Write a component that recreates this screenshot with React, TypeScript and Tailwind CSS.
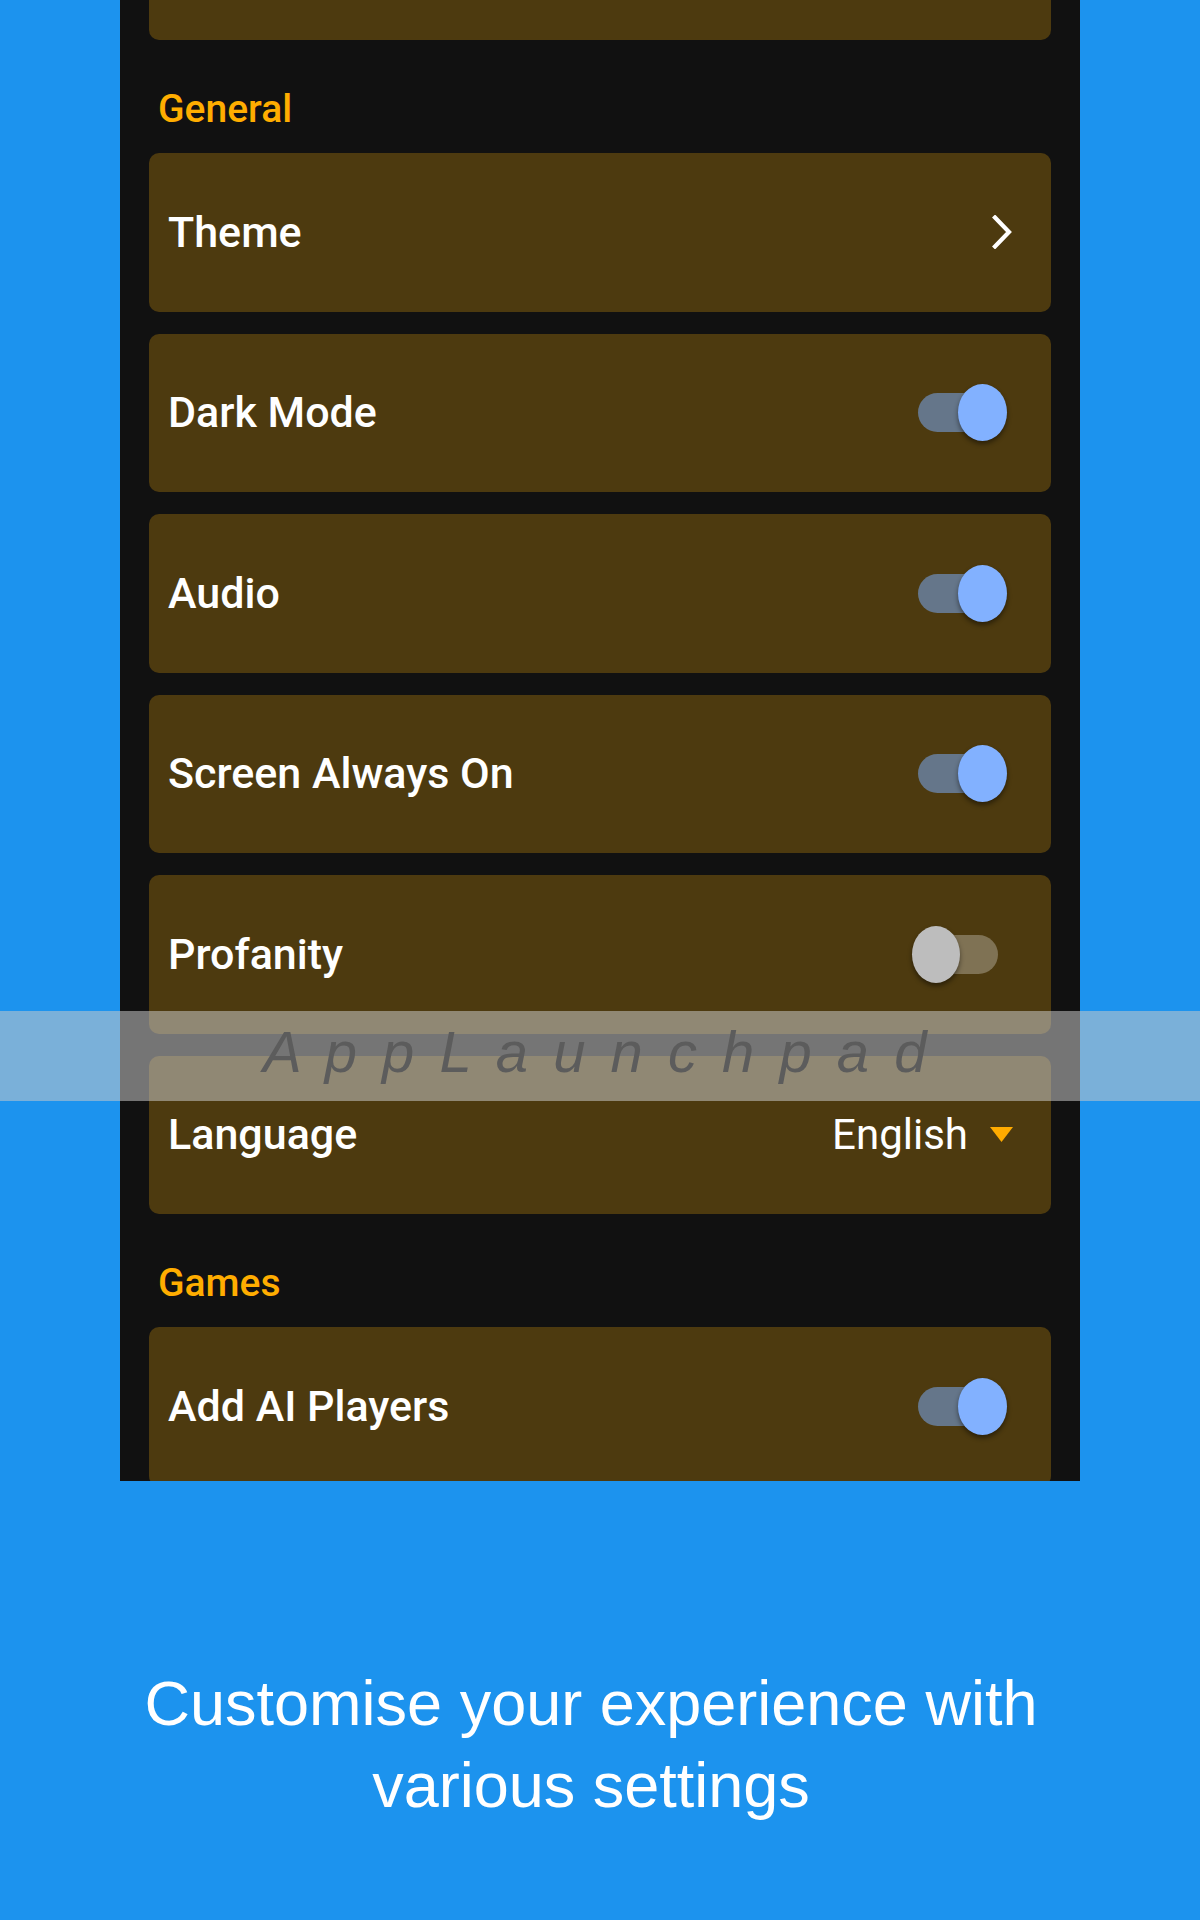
import React from 'react';

type Row =
  | { kind: 'link'; label: string }
  | { kind: 'toggle'; label: string; on: boolean }
  | { kind: 'select'; label: string; value: string };

const general: Row[] = [
  { kind: 'link', label: 'Theme' },
  { kind: 'toggle', label: 'Dark Mode', on: true },
  { kind: 'toggle', label: 'Audio', on: true },
  { kind: 'toggle', label: 'Screen Always On', on: true },
  { kind: 'toggle', label: 'Profanity', on: false },
  { kind: 'select', label: 'Language', value: 'English' },
];

const games: Row[] = [{ kind: 'toggle', label: 'Add AI Players', on: true }];

const Toggle = ({ on }: { on: boolean }) => (
  <div className="relative w-[95px] h-[57px]">
    <div
      className={
        on
          ? 'absolute left-[6px] top-[9px] w-[80px] h-[39px] rounded-full bg-[#65768a]'
          : 'absolute left-[6px] top-[9px] w-[80px] h-[39px] rounded-full bg-[#7f7254]'
      }
    />
    <div
      className={
        on
          ? 'absolute left-[46px] top-0 w-[49px] h-[57px] rounded-[50%] bg-[#82b1ff] shadow-[0_3px_5px_rgba(0,0,0,0.45)]'
          : 'absolute left-0 top-0 w-[48px] h-[57px] rounded-[50%] bg-[#bdbdbd] shadow-[0_3px_5px_rgba(0,0,0,0.45)]'
      }
    />
  </div>
);

const Chevron = () => (
  <svg width="20" height="34" viewBox="0 0 20 34" className="mr-[1px]">
    <polyline points="3,2.5 17,17 3,31.5" fill="none" stroke="#ffffff" strokeWidth="4.2" strokeLinecap="square" />
  </svg>
);

const SettingCard = ({ row }: { row: Row }) => (
  <div className="flex items-center justify-between h-[158.5px] shrink-0 rounded-[10px] bg-[#4d3a0f] pl-[19px] pr-[38px]">
    <span className="text-[43px] font-medium text-white leading-none">{row.label}</span>
    {row.kind === 'link' && <Chevron />}
    {row.kind === 'toggle' && (
      <div className="mr-[6px]">
        <Toggle on={row.on} />
      </div>
    )}
    {row.kind === 'select' && (
      <div className="flex items-center gap-[22px]">
        <span className="text-[42px] text-white leading-none">{row.value}</span>
        <svg width="23" height="15" viewBox="0 0 23 15">
          <polygon points="0,0 23,0 11.5,15" fill="#ffab00" />
        </svg>
      </div>
    )}
  </div>
);

const SectionLabel = ({ text }: { text: string }) => (
  <div className="pt-[50px] pb-[25px] pl-[9px] text-[39px] leading-[38px] font-medium text-[#ffad00]">{text}</div>
);

export default function App() {
  return (
    <div className="relative w-[1200px] h-[1920px] overflow-hidden bg-[#1c93ee]" style={{ fontFamily: 'Roboto, "Noto Sans", sans-serif' }}>
      <div className="mx-auto w-[960px] h-[1481px] overflow-hidden bg-[#111111] px-[29px]">
        <div className="h-[40px] rounded-b-[10px] bg-[#4d3a0f]" />
        <SectionLabel text="General" />
        <div className="flex flex-col gap-[22px]">
          {general.map((row) => (
            <SettingCard key={row.label} row={row} />
          ))}
        </div>
        <SectionLabel text="Games" />
        <div className="flex flex-col gap-[22px]">
          {games.map((row) => (
            <SettingCard key={row.label} row={row} />
          ))}
        </div>
      </div>

      <p
        className="mt-[181px] pr-[18px] text-center text-[63px] leading-[82px] text-white"
        style={{ fontFamily: '"Liberation Sans", Arial, sans-serif' }}
      >
        Customise your experience with
        <br />
        various settings
      </p>

      {/* watermark band */}
      <div className="absolute left-0 right-0 top-[1011px] h-[90px] flex items-center justify-center bg-[rgba(200,200,200,0.55)] pb-[8px] pr-[6px]">
        <span
          className="italic text-[58px] leading-none tracking-[4.5px] text-[#5c5c5c]"
          style={{ fontFamily: '"Liberation Sans", Arial, sans-serif' }}
        >
          A p p L a u n c h p a d
        </span>
      </div>
    </div>
  );
}
